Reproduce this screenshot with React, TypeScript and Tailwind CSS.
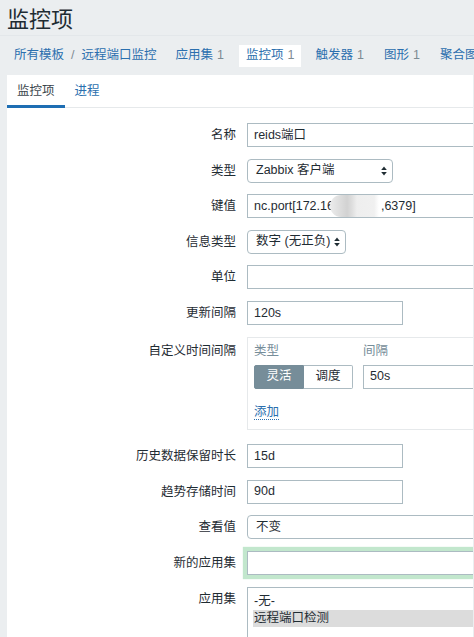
import React from "react";

const Arrow = () => (
  <svg width="6" height="10" viewBox="0 0 6 10" className="shrink-0">
    <path d="M3 0.5 L5.8 4 L0.2 4 Z" fill="#1f2c33" />
    <path d="M3 9.5 L5.8 6 L0.2 6 Z" fill="#1f2c33" />
  </svg>
);

function Row({ label, children, top = false }: { label: string; children: React.ReactNode; top?: boolean }) {
  return (
    <div className="flex items-start">
      <div className={"w-[229px] shrink-0 text-right text-[#1f2c33] leading-[24px] " + (top ? "pt-[2px]" : "")}>{label}</div>
      <div className="ml-[11px] flex-1 min-w-0">{children}</div>
    </div>
  );
}

export default function App() {
  return (
    <div className="w-[474px] h-[637px] overflow-hidden bg-[#ebeef0] font-['Liberation_Sans','Noto_Sans_CJK_SC',sans-serif] text-[12.5px] text-[#1f2c33]">
      {/* title */}
      <div className="h-[36px] border-b border-[#e3e7ea] pl-[7px] pt-[9px] text-[22px] leading-[22px] text-[#1f2c33]">监控项</div>
      {/* nav */}
      <div className="h-[39px] flex items-center pl-[7px] whitespace-nowrap overflow-hidden">
        <div className="px-[7px] h-[22px] flex items-center text-[#2b6fae] shrink-0">
          所有模板<span className="text-[#7d8b93] mx-[7px]">/</span>远程端口监控
        </div>
        <div className="ml-[5px] px-[7px] h-[22px] flex items-center text-[#2b6fae] shrink-0">
          应用集<span className="text-[#7d8b93] ml-[4px]">1</span>
        </div>
        <div className="ml-[8px] px-[7px] h-[22px] flex items-center bg-white text-[#2b6fae] shrink-0">
          监控项<span className="text-[#7d8b93] ml-[4px]">1</span>
        </div>
        <div className="ml-[7px] px-[7px] h-[22px] flex items-center text-[#2b6fae] shrink-0">
          触发器<span className="text-[#7d8b93] ml-[4px]">1</span>
        </div>
        <div className="ml-[6px] px-[7px] h-[22px] flex items-center text-[#2b6fae] shrink-0">
          图形<span className="text-[#7d8b93] ml-[4px]">1</span>
        </div>
        <div className="ml-[6px] px-[7px] h-[22px] flex items-center text-[#2b6fae] shrink-0">聚合图形</div>
      </div>
      {/* panel */}
      <div className="ml-[7px] mr-[1px] bg-white h-[600px] overflow-hidden">
        <div className="flex border-b border-[#e6e9eb] h-[33px]">
          <div className="px-[10px] h-[33px] flex items-center border-b-[3px] border-[#1e6eb3] text-[#3b464d] pt-[2px]">监控项</div>
          <div className="px-[10px] h-[33px] flex items-center text-[#2b6fae] pb-[1px]">进程</div>
        </div>
        <div className="pt-[15px] flex flex-col gap-[11.6px] whitespace-nowrap">
          <Row label="名称">
            <div className="h-[24px] w-[300px] border border-[#acbbc2] px-[6px] flex items-center">reids端口</div>
          </Row>
          <Row label="类型">
            <div className="h-[24px] w-[146px] border border-[#acbbc2] rounded-[4px] pl-[8px] pr-[5px] flex items-center justify-between">
              <span>Zabbix 客户端</span>
              <Arrow />
            </div>
          </Row>
          <Row label="键值">
            <div className="relative h-[24px] w-[300px] border border-[#acbbc2] px-[6px] flex items-center">
              <span>nc.port[172.16</span>
              <span className="inline-block w-[47px] shrink-0" />
              <span>,6379]</span>
              <div className="absolute left-[82px] top-0 w-[49px] h-[22px] rounded-l-[11px] bg-[linear-gradient(to_right,#ececec_0%,#d2d2d2_35%,#dedede_45%,#eeeeee_55%,#f0f0f0_90%,#ffffff_100%)]" />
            </div>
          </Row>
          <Row label="信息类型">
            <div className="h-[24px] w-[99px] border border-[#acbbc2] rounded-[4px] pl-[8px] pr-[5px] flex items-center justify-between">
              <span>数字 (无正负)</span>
              <Arrow />
            </div>
          </Row>
          <Row label="单位">
            <div className="h-[24px] w-[300px] border border-[#acbbc2]" />
          </Row>
          <Row label="更新间隔">
            <div className="h-[24px] w-[156px] border border-[#acbbc2] px-[6px] flex items-center">120s</div>
          </Row>
          <div className="mb-[3px]">
            <Row label="自定义时间间隔" top>
              <div className="h-[93px] w-[300px] border border-[#e6e9eb] pl-[6px] pt-[5px]">
                <div className="flex leading-[16px] text-[#768d99]">
                  <div className="w-[109px] shrink-0">类型</div>
                  <div>间隔</div>
                </div>
                <div className="flex mt-[6px]">
                  <div className="flex w-[109px] shrink-0">
                    <div className="h-[24px] w-[50px] bg-[#768d99] border border-[#768d99] rounded-l-[2px] text-white flex items-center justify-center">灵活</div>
                    <div className="h-[24px] w-[49px] border border-l-0 border-[#acbbc2] rounded-r-[2px] flex items-center justify-center">调度</div>
                  </div>
                  <div className="h-[24px] w-[200px] shrink-0 border border-[#acbbc2] px-[6px] flex items-center">50s</div>
                </div>
                <div className="mt-[14px]">
                  <span className="inline-block leading-[14px] text-[#2b6fae] border-b border-dotted border-[#2b6fae]">添加</span>
                </div>
              </div>
            </Row>
          </div>
          <Row label="历史数据保留时长">
            <div className="h-[24px] w-[156px] border border-[#acbbc2] px-[6px] flex items-center">15d</div>
          </Row>
          <Row label="趋势存储时间">
            <div className="h-[24px] w-[156px] border border-[#acbbc2] px-[6px] flex items-center">90d</div>
          </Row>
          <Row label="查看值">
            <div className="h-[24px] w-[300px] border border-[#acbbc2] rounded-[4px] pl-[8px] flex items-center">不变</div>
          </Row>
          <Row label="新的应用集">
            <div className="h-[24px] w-[300px] border border-[#acbbc2] shadow-[0_0_1px_4px_#c2e7cd]" />
          </Row>
          <Row label="应用集">
            <div className="h-[80px] w-[300px] border border-[#acbbc2] pt-[5px] pl-[5px]">
              <div className="h-[17px] leading-[17px] pl-[1px]">-无-</div>
              <div className="h-[17px] leading-[17px] pl-[1px] bg-[#dcdcdc]">远程端口检测</div>
            </div>
          </Row>
        </div>
      </div>
    </div>
  );
}
